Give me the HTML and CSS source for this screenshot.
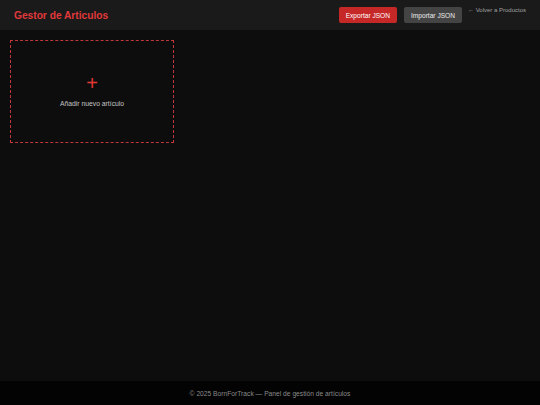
FILE: index.html
```html
<!DOCTYPE html>
<html lang="es">
<head>
<meta charset="utf-8">
<title>Gestor de Articulos</title>
<link rel="stylesheet" href="styles.css">
</head>
<body>
<header class="topbar">
  <h1 class="title">Gestor de Articulos</h1>
  <div class="actions">
    <button class="btn btn-red">Exportar JSON</button>
    <button class="btn btn-gray">Importar JSON</button>
    <a class="back" href="#">← Volver a Productos</a>
  </div>
</header>
<main class="content">
  <div class="grid">
    <div class="add-card">
      <span class="plus">+</span>
      <span class="add-text">Añadir nuevo artículo</span>
    </div>
  </div>
</main>
<footer class="footer">© 2025 BornForTrack — Panel de gestión de artículos</footer>
</body>
</html>
```
FILE: styles.css
```css
html, body {
  margin: 0;
  padding: 0;
  height: 100%;
}
body {
  font-family: "Liberation Sans", Arial, sans-serif;
  background: #0d0d0d;
  color: #ccc;
  display: flex;
  flex-direction: column;
  min-height: 100vh;
}
.topbar {
  height: 30px;
  box-sizing: border-box;
  background: #1a1a1a;
  display: flex;
  align-items: center;
  justify-content: space-between;
  padding: 0 14px;
}
.title {
  margin: 0;
  font-size: 10.2px;
  font-weight: bold;
  color: #e0393b;
}
.actions {
  display: flex;
  align-items: center;
  gap: 7px;
}
.btn {
  font-family: "Liberation Sans", Arial, sans-serif;
  font-size: 6.6px;
  height: 16px;
  padding: 0 7px;
  border: none;
  border-radius: 2px;
  color: #fff;
}
.btn-red {
  background: #c62828;
}
.btn-gray {
  background: #444;
  color: #ececec;
}
.back {
  font-size: 6px;
  color: #a0a0a0;
  text-decoration: none;
  align-self: flex-start;
  margin-left: -1px;
}
.content {
  flex: 1;
  padding: 10px;
}
.grid {
  display: flex;
}
.add-card {
  width: 164px;
  height: 103px;
  box-sizing: border-box;
  border: 1px dashed #c0363a;
  display: flex;
  flex-direction: column;
  align-items: center;
  justify-content: center;
}
.plus {
  color: #e53935;
  font-size: 20px;
  line-height: 14px;
  height: 14px;
  margin-top: -1px;
  margin-bottom: 10px;
}
.add-text {
  font-size: 6.8px;
  color: #c4c4c4;
}
.footer {
  height: 24px;
  background: #030303;
  color: #8a8a8a;
  font-size: 6.7px;
  display: flex;
  align-items: center;
  justify-content: center;
}
```
